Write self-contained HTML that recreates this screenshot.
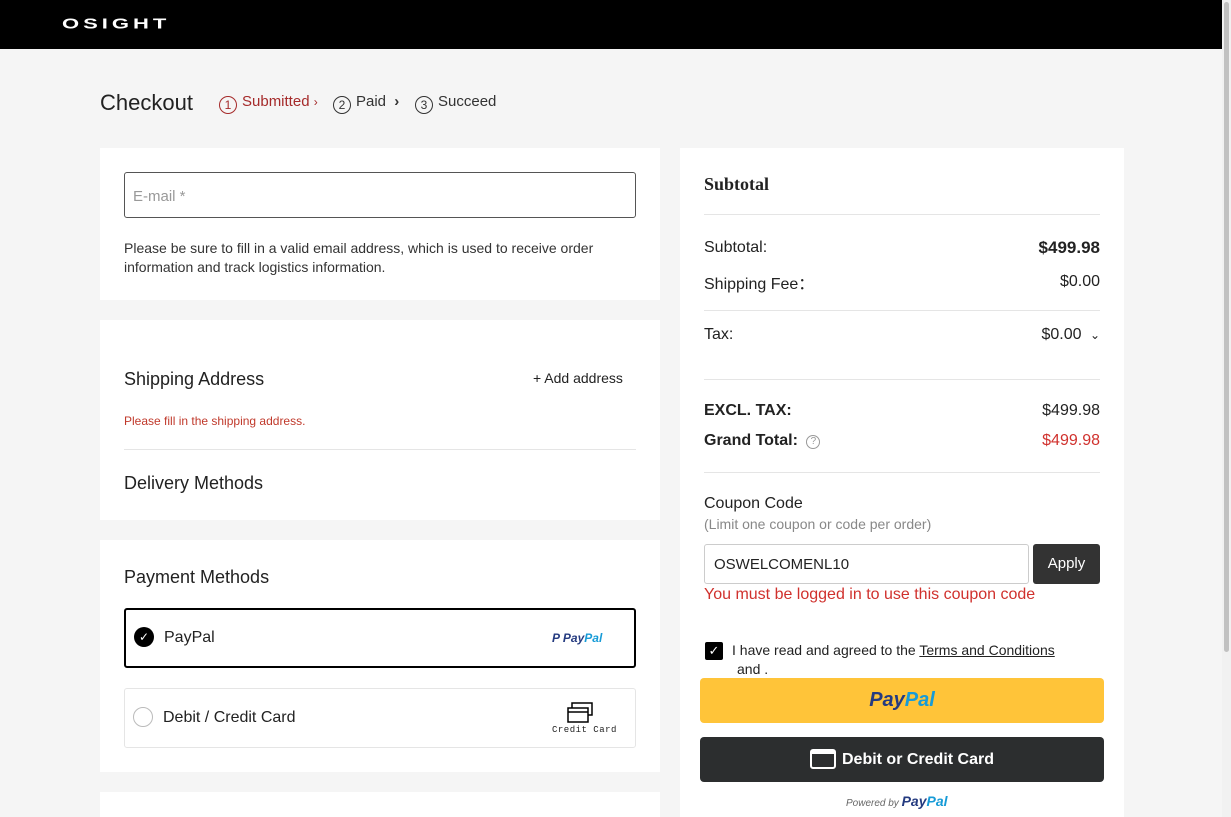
<!DOCTYPE html>
<html><head><meta charset="utf-8"><style>
*{box-sizing:border-box;margin:0;padding:0}
html,body{width:1231px;height:817px;overflow:hidden}
body{background:#f5f5f5;font-family:"Liberation Sans",sans-serif;color:#222;position:relative}
.hdr{position:absolute;left:0;top:0;width:1222px;height:49px;background:#000}
.logo{position:absolute;left:62px;top:11px;color:#fff;font-weight:bold;font-size:22px;letter-spacing:4px;transform:scaleY(.65);transform-origin:left center}
.sb{position:absolute;right:0;top:0;width:9px;height:817px;background:#f1f1f1}
.sb i{position:absolute;left:2px;top:2px;width:5px;height:650px;background:#c1c1c1;border-radius:3px}
.abs{position:absolute}
.card{position:absolute;background:#fff}
.t{position:absolute;white-space:nowrap}
.row{position:absolute;left:704px;width:396px;font-size:16px;display:flex;justify-content:space-between;align-items:center}
.line{position:absolute;left:704px;width:396px;height:1px;background:#e5e5e5}
.circ{display:inline-block;width:18px;height:18px;border:1px solid #333;border-radius:50%;font-size:12px;text-align:center;line-height:16px;margin-right:5px;vertical-align:-3px}
</style></head><body>
<div class="hdr"><div class="logo">OSIGHT</div></div>
<div class="sb"><i></i></div>
<div class="t" style="left:100px;top:90px;font-size:22px">Checkout</div>
<div class="t" style="left:219px;top:93px;font-size:15px;color:#a52a2a"><span class="circ" style="border-color:#a52a2a">1</span>Submitted <span style="font-size:12px">›</span></div>
<div class="t" style="left:333px;top:93px;font-size:15px;color:#333"><span class="circ">2</span>Paid <b style="margin-left:4px">›</b></div>
<div class="t" style="left:415px;top:93px;font-size:15px;color:#333"><span class="circ">3</span>Succeed</div>

<div class="card" style="left:100px;top:148px;width:560px;height:152px">
<div class="abs" style="left:24px;top:24px;width:512px;height:46px;border:1px solid #555;border-radius:3px;padding:15px 8px;font-size:15px;color:#999">E-mail *</div>
<div class="abs" style="left:24px;top:91px;width:510px;font-size:14px;line-height:19px;color:#333">Please be sure to fill in a valid email address, which is used to receive order information and track logistics information.</div>
</div>
<div class="card" style="left:100px;top:320px;width:560px;height:200px">
<div class="t" style="left:24px;top:49px;font-size:18px">Shipping Address</div>
<div class="t" style="left:433px;top:50px;font-size:14px">+ Add address</div>
<div class="t" style="left:24px;top:94px;font-size:12px;color:#c0392b">Please fill in the shipping address.</div>
<div class="abs" style="left:24px;top:129px;width:512px;height:1px;background:#e5e5e5"></div>
<div class="t" style="left:24px;top:153px;font-size:18px">Delivery Methods</div>
</div>
<div class="card" style="left:100px;top:540px;width:560px;height:232px">
<div class="t" style="left:24px;top:27px;font-size:18px">Payment Methods</div>
<div class="abs" style="left:24px;top:68px;width:512px;height:60px;border:2px solid #000;border-radius:3px"></div>
<div class="abs" style="left:34px;top:87px;width:20px;height:20px;border-radius:50%;background:#000;color:#fff;font-size:12px;text-align:center;line-height:20px">✓</div>
<div class="t" style="left:64px;top:89px;font-size:16px">PayPal</div>
<div class="t" style="left:452px;top:91px;font-size:12px;font-weight:bold;font-style:italic;color:#253b80">P <span>Pay</span><span style="color:#179bd7">Pal</span></div>
<div class="abs" style="left:24px;top:148px;width:512px;height:60px;border:1px solid #e5e5e5;border-radius:3px"></div>
<div class="abs" style="left:33px;top:167px;width:20px;height:20px;border-radius:50%;border:1px solid #bbb"></div>
<div class="t" style="left:63px;top:169px;font-size:16px">Debit / Credit Card</div>
<svg class="abs" style="left:466px;top:161px" width="28" height="26" viewBox="0 0 28 26" fill="none" stroke="#000" stroke-width="1.5"><rect x="6" y="2" width="20" height="12"/><rect x="2" y="7" width="20" height="14" fill="#fff"/><line x1="2" y1="11" x2="22" y2="11"/></svg>
<div class="t" style="left:452px;top:185px;font-size:9px;letter-spacing:.5px;font-family:'Liberation Mono',monospace">Credit Card</div>
</div>
<div class="card" style="left:100px;top:792px;width:560px;height:25px"></div>

<div class="card" style="left:680px;top:148px;width:444px;height:669px"></div>
<div class="t" style="left:704px;top:174px;font-size:18px;font-weight:bold;font-family:'Liberation Serif',serif">Subtotal</div>
<div class="line" style="top:214px"></div>
<div class="row" style="top:238px"><span>Subtotal:</span><span style="font-weight:bold;font-size:17px">$499.98</span></div>
<div class="row" style="top:270px"><span>Shipping Fee：</span><span>$0.00</span></div>
<div class="line" style="top:310px"></div>
<div class="row" style="top:326px"><span>Tax:</span><span>$0.00 <span style="font-size:12px;margin-left:4px">⌄</span></span></div>
<div class="line" style="top:379px"></div>
<div class="row" style="top:402px"><span style="font-weight:bold">EXCL. TAX:</span><span>$499.98</span></div>
<div class="row" style="top:432px"><span style="font-weight:bold">Grand Total: <span style="display:inline-block;width:14px;height:14px;border:1px solid #999;border-radius:50%;font-size:10px;text-align:center;line-height:12px;color:#999;font-weight:normal;margin-left:4px;vertical-align:1px">?</span></span><span style="color:#d0312d">$499.98</span></div>
<div class="line" style="top:472px"></div>
<div class="t" style="left:704px;top:495px;font-size:16px">Coupon Code</div>
<div class="t" style="left:704px;top:516px;font-size:14px;color:#888">(Limit one coupon or code per order)</div>
<div class="abs" style="left:704px;top:544px;width:325px;height:40px;border:1px solid #ccc;border-radius:3px;padding:11px 9px;font-size:15px">OSWELCOMENL10</div>
<div class="abs" style="left:1033px;top:544px;width:67px;height:40px;background:#333;border-radius:3px;color:#fff;font-size:15px;text-align:center;line-height:40px">Apply</div>
<div class="t" style="left:704px;top:586px;font-size:16px;color:#d0312d">You must be logged in to use this coupon code</div>
<div class="abs" style="left:705px;top:642px;width:18px;height:18px;background:#000;border-radius:2px;color:#fff;font-size:13px;text-align:center;line-height:18px">✓</div>
<div class="t" style="left:732px;top:642px;font-size:14px">I have read and agreed to the <u>Terms and Conditions</u></div>
<div class="t" style="left:737px;top:661px;font-size:14px">and .</div>
<div class="abs" style="left:700px;top:678px;width:404px;height:45px;background:#ffc439;border-radius:4px;text-align:center;line-height:45px;font-size:20px;font-weight:bold;font-style:italic;color:#253b80">Pay<span style="color:#179bd7">Pal</span></div>
<div class="abs" style="left:700px;top:737px;width:404px;height:45px;background:#2c2e2f;border-radius:4px;text-align:center;line-height:45px;font-size:16px;font-weight:bold;color:#fff"><span style="display:inline-block;width:26px;height:20px;border:2px solid #fff;border-radius:3px;vertical-align:-5px;margin-right:6px;border-top-width:5px"></span>Debit or Credit Card</div>
<div class="t" style="left:846px;top:793px;font-size:10px;font-style:italic;color:#666">Powered by <b style="font-size:14px;color:#253b80">Pay<span style="color:#179bd7">Pal</span></b></div>
</body></html>
